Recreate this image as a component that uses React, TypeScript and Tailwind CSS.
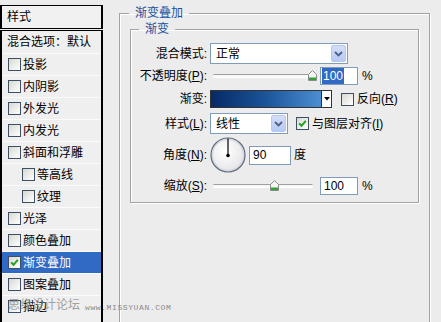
import type { ReactNode } from "react";

const LIST = [
  { label: "投影" },
  { label: "内阴影" },
  { label: "外发光" },
  { label: "内发光" },
  { label: "斜面和浮雕" },
  { label: "等高线", indent: true },
  { label: "纹理", indent: true },
  { label: "光泽" },
  { label: "颜色叠加" },
  { label: "渐变叠加", checked: true, active: true },
  { label: "图案叠加" },
  { label: "描边" },
];

function Check({ checked }: { checked?: boolean }) {
  return (
    <span className="w-[13px] h-[13px] shrink-0 border border-[#3e4e63] bg-gradient-to-br from-[#d8d8d2] to-white flex items-center justify-center">
      {checked && (
        <svg width="11" height="11" viewBox="0 0 11 11">
          <path d="M2.2 5.4 L4.5 7.8 L8.8 2.8" fill="none" stroke="#21a121" strokeWidth="2" />
        </svg>
      )}
    </span>
  );
}

function DropBtn() {
  return (
    <span className="w-[15px] h-[17px] rounded-[2px] border border-[#b7c8f0] bg-gradient-to-b from-[#d4def8] to-[#b6c9f5] flex items-center justify-center">
      <svg width="9" height="6" viewBox="0 0 9 6">
        <path d="M1 1 L4.5 4.5 L8 1" fill="none" stroke="#4d6185" strokeWidth="1.8" />
      </svg>
    </span>
  );
}

function Slider({ at }: { at: number }) {
  return (
    <div className="relative w-[106px] h-[12px] shrink-0">
      <div className="absolute left-[3px] right-[3px] top-[4px] h-[3px] rounded-full border-t border-[#9d9d9d] bg-[#f8f8f8] shadow-[0_1px_0_#fff]" />
      <svg className="absolute top-0" style={{ left: at }} width="9" height="11" viewBox="0 0 9 11">
        <path d="M0.5 4.5 L4.5 0.5 L8.5 4.5 V10.5 H0.5Z" fill="#f4f4f4" stroke="#8c8c8c" />
        <rect x="1" y="7.5" width="7" height="2.5" fill="#35a035" />
      </svg>
    </div>
  );
}

function Row({ label, h, mt, children }: { label: ReactNode; h: string; mt: string; children: ReactNode }) {
  return (
    <div className={`flex items-center ${h} ${mt}`}>
      <span className="w-[76px] text-right whitespace-nowrap">{label}</span>
      <div className="ml-[3px] flex items-center">{children}</div>
    </div>
  );
}

const U = ({ c }: { c: string }) => <span className="underline underline-offset-1">{c}</span>;

export default function App() {
  return (
    <div className="relative w-[441px] h-[322px] overflow-hidden bg-[#ececec] flex text-[12px] leading-none text-black font-['Liberation_Sans','Noto_Sans_CJK_SC',sans-serif]">
      {/* 左侧样式列表 */}
      <div className="w-[103px] shrink-0 flex flex-col">
        <div className="mt-[5px] h-[24px] border-x-2 border-y border-black bg-[#f1f1f1] flex items-center pl-[5px]">
          样式
        </div>
        <div className="mt-[1px] flex-1 border-x-2 border-t border-black bg-[#efefef]">
          <div className="h-[22px] flex items-center pl-[5px]">混合选项：默认</div>
          {LIST.map((it) => (
            <div
              key={it.label}
              className={[
                "h-[22px] border-t border-[#fbfbfb] flex items-center gap-[2px]",
                it.indent ? "pl-[20px]" : "pl-[6px]",
                it.active ? "bg-[#316ac5] text-white" : "",
              ].join(" ")}
            >
              <Check checked={it.checked} />
              <span>{it.label}</span>
            </div>
          ))}
        </div>
      </div>

      {/* 右侧 渐变叠加 */}
      <div className="flex-1">
        <fieldset className="ml-[16px] mt-[5px] w-[310px] h-[340px] border border-[#a3a3a3] px-[10px] shadow-[1px_1px_0_#fff,inset_1px_1px_0_#fff]">
          <legend className="-ml-px px-[6px] leading-[16px] text-[#1f4fa0]">渐变叠加</legend>
          <fieldset className="w-[289px] h-[182px] border border-[#a3a3a3] shadow-[1px_1px_0_#fff,inset_1px_1px_0_#fff]">
            <legend className="ml-[8px] px-[6px] leading-[16px] text-[#1f4fa0]">渐变</legend>
            <div className="flex flex-col pt-[6px]">
              <Row label="混合模式:" h="h-[21px]" mt="">
                <div className="w-[138px] h-[21px] border border-[#7f9db9] bg-white flex items-center justify-between pl-[5px] pr-px">
                  <span>正常</span>
                  <DropBtn />
                </div>
              </Row>

              <Row label={<>不透明度(<U c="P" />):</>} h="h-[18px]" mt="mt-[3px]">
                <Slider at={98} />
                <div className="ml-[4px] w-[38px] h-[18px] border border-[#7f9db9] bg-white flex items-center pl-[1px]">
                  <span className="bg-[#316ac5] text-white px-px py-[2px]">100</span>
                </div>
                <span className="ml-[4px]">%</span>
              </Row>

              <Row label="渐变:" h="h-[18px]" mt="mt-[5px]">
                <div className="w-[122px] h-[18px] border border-[#333] flex">
                  <div className="flex-1 bg-gradient-to-r from-[#062a66] via-[#1c549a] to-[#4b8fd3]" />
                  <div className="w-[10px] bg-white border-l border-[#333] flex items-center justify-center">
                    <svg width="6" height="4" viewBox="0 0 6 4">
                      <path d="M0 0 H6 L3 3.5Z" fill="#000" />
                    </svg>
                  </div>
                </div>
                <span className="ml-[9px]">
                  <Check />
                </span>
                <span className="ml-[3px]">
                  反向(<U c="R" />)
                </span>
              </Row>

              <Row label={<>样式(<U c="L" />):</>} h="h-[21px]" mt="mt-[5px]">
                <div className="w-[78px] h-[21px] border border-[#7f9db9] bg-white flex items-center justify-between pl-[5px] pr-px">
                  <span>线性</span>
                  <DropBtn />
                </div>
                <span className="ml-[8px]">
                  <Check checked />
                </span>
                <span className="ml-[3px]">
                  与图层对齐(<U c="I" />)
                </span>
              </Row>

              <Row label={<>角度(<U c="N" />):</>} h="h-[36px]" mt="mt-[3px]">
                <svg width="36" height="36" viewBox="0 0 36 36">
                  <defs>
                    <radialGradient id="dial" cx="42%" cy="38%" r="70%">
                      <stop offset="0" stopColor="#ffffff" />
                      <stop offset="1" stopColor="#e2e2e6" />
                    </radialGradient>
                  </defs>
                  <circle cx="18" cy="18" r="17" fill="url(#dial)" stroke="#5d687d" strokeWidth="1.2" />
                  <circle cx="18" cy="18" r="15.6" fill="none" stroke="#cfd2da" strokeWidth="1" />
                  <line x1="18" y1="18" x2="18" y2="1.5" stroke="#000" strokeWidth="1.2" />
                  <circle cx="18" cy="18.5" r="1.8" fill="#000" />
                </svg>
                <div className="ml-[3px] w-[42px] h-[19px] border border-[#7f9db9] bg-white flex items-center pl-[3px]">
                  90
                </div>
                <span className="ml-[3px]">度</span>
              </Row>

              <Row label={<>缩放(<U c="S" />):</>} h="h-[18px]" mt="mt-[4px]">
                <Slider at={60} />
                <div className="ml-[4px] w-[38px] h-[18px] border border-[#7f9db9] bg-white flex items-center pl-[3px]">
                  100
                </div>
                <span className="ml-[4px]">%</span>
              </Row>
            </div>
          </fieldset>
        </fieldset>
      </div>

      {/* 水印 */}
      <span className="absolute left-[8px] top-[299px] text-[12px] text-[#8a8a8a]/80">思缘设计论坛</span>
      <span className="absolute left-[85px] top-[304px] text-[8px] tracking-[0.6px] text-[#8a8a8a] font-['Liberation_Mono',monospace]">
        www.MISSYUAN.COM
      </span>
    </div>
  );
}
